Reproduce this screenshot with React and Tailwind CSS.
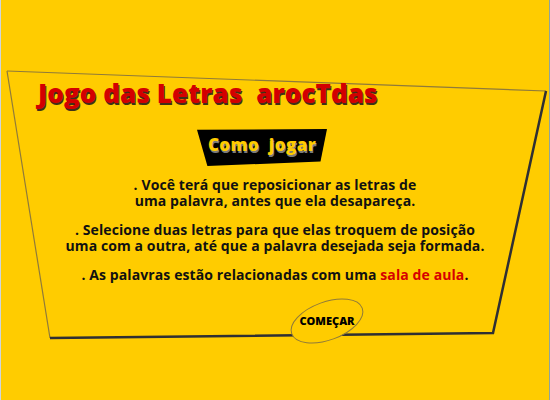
import React from "react";

export default function App() {
  return (
    <div className="relative h-[400px] w-[550px] overflow-hidden border-l border-r border-l-[#cfd6dc] border-r-[#8fa39a] bg-[#ffcc00] font-['Open_Sans',sans-serif]">
      {/* hand-drawn frame */}
      <svg className="absolute inset-0" width="550" height="400" viewBox="0 0 550 400">
        <path d="M6 71 L545 91" stroke="#8f7a3a" strokeWidth="1.2" fill="none" />
        <path d="M6 71 L49 338" stroke="#8f7a3a" strokeWidth="1.2" fill="none" />
        <path d="M545 91 L492 333 L49 338" stroke="#2f2f33" strokeWidth="2.5" fill="none" strokeLinejoin="miter" />
      </svg>

      <div className="relative flex flex-col items-center">
        <h1 className="ml-[37px] mt-[76px] self-start text-[26px] font-extrabold leading-[34px] tracking-[0.1px] text-[#d30000] [text-shadow:1px_2px_0_#3f3018]">
          Jogo das Letras&nbsp; arocTdas
        </h1>

        <div className="mr-[26px] mt-[19px] flex h-[37px] w-[130px] items-center justify-center bg-black [clip-path:polygon(0_2%,100%_0,95%_88%,8%_100%)]">
          <span className="-mt-[6px] text-[17px] font-extrabold tracking-[0.4px] text-[#ffcc00] [text-shadow:1px_2px_0_#7a7a7a]">
            Como&nbsp; jogar
          </span>
        </div>

        <div className="mt-[11px] flex flex-col items-center gap-[13px] text-center text-[14px] font-bold leading-[16px] tracking-[0.1px] text-[#111]">
          <p>
            . Você terá que reposicionar as letras de
            <br />
            uma palavra, antes que ela desapareça.
          </p>
          <p>
            . Selecione duas letras para que elas troquem de posição
            <br />
            uma com a outra, até que a palavra desejada seja formada.
          </p>
          <p>
            . As palavras estão relacionadas com uma <span className="text-[#d60000]">sala de aula</span>.
          </p>
        </div>
      </div>

      {/* Começar button */}
      <div className="absolute left-[286px] top-[296px] flex h-[50px] w-[80px] items-center justify-center">
        <svg className="absolute inset-0" width="80" height="50" viewBox="0 0 80 50">
          <ellipse cx="40" cy="25" rx="37.5" ry="19" transform="rotate(-20 40 25)" stroke="#8f7a3a" strokeWidth="1" fill="#ffcc00" />
        </svg>
        <span className="relative text-[11px] font-extrabold text-black">COMEÇAR</span>
      </div>
    </div>
  );
}
